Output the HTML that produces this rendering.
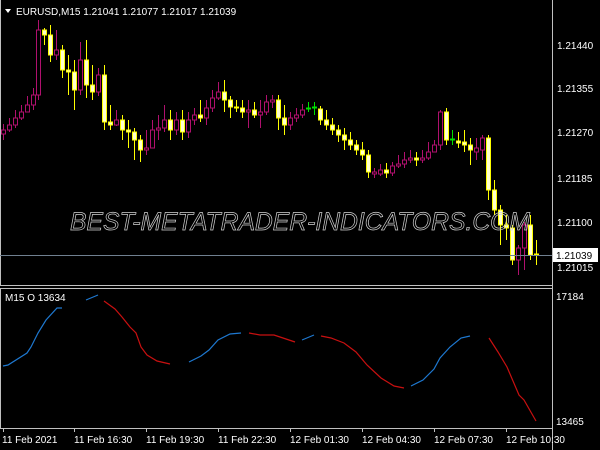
<!DOCTYPE html>
<html><head><meta charset="utf-8"><style>
html,body{margin:0;padding:0;background:#000;width:600px;height:450px;overflow:hidden}
svg{display:block}
text{font-family:"Liberation Sans",sans-serif;fill:#fff;font-size:10px}
.y{fill:#ffffd0;stroke:#ffff00}
.m{fill:#000;stroke:#b0106e}
.g{fill:#000;stroke:#00e000}
</style></head><body>
<svg width="600" height="450" xmlns="http://www.w3.org/2000/svg">
<rect x="0" y="0" width="600" height="450" fill="#000"/>
<line x1="0.5" y1="0" x2="0.5" y2="285" stroke="#c0c0c0"/>
<line x1="552.5" y1="0" x2="552.5" y2="450" stroke="#c0c0c0"/>
<line x1="0" y1="285.5" x2="552" y2="285.5" stroke="#c0c0c0"/>
<line x1="0" y1="288.5" x2="552" y2="288.5" stroke="#c0c0c0"/>
<line x1="0.5" y1="288" x2="0.5" y2="428" stroke="#c0c0c0"/>
<line x1="0" y1="428.5" x2="552" y2="428.5" stroke="#c0c0c0"/>

<path stroke="#b0106e" fill="none" d="M3.5 124V140M9.5 118V132M15.5 110V128M21.5 105V120M27.5 96V112M33.5 88V110M38.5 20V100M56.5 30V60M80.5 42V95M98.5 68V96M116.5 110V126M146.5 130V155M152.5 120V145M158.5 115V140M164.5 105V132M176.5 112V135M188.5 112V138M194.5 108V125M206.5 100V125M212.5 90V112M218.5 82V100M248.5 100V128M260.5 100V128M266.5 95V115M272.5 95V108M290.5 112V130M296.5 108V122M302.5 104V118M374.5 168V178M380.5 164V176M392.5 162V176M398.5 155V168M404.5 152V168M410.5 150V163M422.5 150V163M428.5 142V160M434.5 140V152M440.5 110V150M476.5 138V160M482.5 135V160M518.5 245V275M524.5 222V270"/>
<path stroke="#ffff00" fill="none" d="M44.5 28V45M50.5 25V62M62.5 45V78M68.5 55V95M74.5 60V110M86.5 40V98M92.5 65V100M104.5 65V130M110.5 105V130M122.5 115V140M128.5 120V148M134.5 128V160M140.5 135V162M170.5 110V140M182.5 110V140M200.5 100V122M224.5 80V112M230.5 96V118M236.5 100V112M242.5 100V118M254.5 102V118M278.5 95V130M284.5 105V135M320.5 106V125M326.5 110V130M332.5 118V135M338.5 125V142M344.5 128V150M350.5 132V150M356.5 140V155M362.5 142V160M368.5 150V178M386.5 163V178M416.5 152V166M446.5 108V145M458.5 132V148M464.5 130V152M470.5 138V165M488.5 135V200M494.5 180V215M500.5 205V245M506.5 215V240M512.5 225V265M530.5 215V260M536.5 240V265"/>
<path stroke="#00e000" fill="none" d="M308.5 102V112M314.5 102V115M452.5 130V145"/>

<g>
<rect class="m" x="1.5" y="130" width="4" height="4"/><rect class="m" x="7.5" y="125" width="4" height="5"/><rect class="m" x="13.5" y="118" width="4" height="7"/><rect class="m" x="19.5" y="112" width="4" height="6"/><rect class="m" x="25.5" y="105" width="4" height="7"/><rect class="m" x="31.5" y="95" width="4" height="10"/><rect class="m" x="36.5" y="30" width="4" height="65"/>
<rect class="y" x="42.5" y="30" width="4" height="5"/><rect class="y" x="48.5" y="35" width="4" height="20"/><rect class="m" x="54.5" y="50" width="4" height="5"/><rect class="y" x="60.5" y="50" width="4" height="20"/><rect class="y" x="66.5" y="70" width="4" height="2"/><rect class="y" x="72.5" y="72" width="4" height="18"/><rect class="m" x="78.5" y="60" width="4" height="30"/><rect class="y" x="84.5" y="60" width="4" height="25"/><rect class="y" x="90.5" y="85" width="4" height="7"/><rect class="m" x="96.5" y="75" width="4" height="17"/><rect class="y" x="102.5" y="75" width="4" height="47"/><rect class="y" x="108.5" y="122" width="4" height="3"/><rect class="m" x="114.5" y="120" width="4" height="5"/><rect class="y" x="120.5" y="120" width="4" height="10"/><rect class="y" x="126.5" y="130" width="4" height="2"/><rect class="y" x="132.5" y="132" width="4" height="8"/><rect class="y" x="138.5" y="140" width="4" height="10"/><rect class="m" x="144.5" y="148" width="4" height="2"/><rect class="m" x="150.5" y="130" width="4" height="18"/><rect class="m" x="156.5" y="128" width="4" height="2"/><rect class="m" x="162.5" y="120" width="4" height="8"/><rect class="y" x="168.5" y="120" width="4" height="10"/><rect class="m" x="174.5" y="120" width="4" height="10"/><rect class="y" x="180.5" y="120" width="4" height="12"/><rect class="m" x="186.5" y="120" width="4" height="12"/><rect class="m" x="192.5" y="115" width="4" height="5"/><rect class="y" x="198.5" y="115" width="4" height="3"/><rect class="m" x="204.5" y="108" width="4" height="10"/><rect class="m" x="210.5" y="98" width="4" height="10"/><rect class="m" x="216.5" y="92" width="4" height="6"/><rect class="y" x="222.5" y="92" width="4" height="8"/><rect class="y" x="228.5" y="100" width="4" height="7"/><rect class="y" x="234.5" y="107" width="4" height="1"/><rect class="y" x="240.5" y="108" width="4" height="4"/><rect class="m" x="246.5" y="110" width="4" height="2"/><rect class="y" x="252.5" y="110" width="4" height="5"/><rect class="m" x="258.5" y="112" width="4" height="3"/><rect class="m" x="264.5" y="102" width="4" height="10"/><rect class="m" x="270.5" y="100" width="4" height="2"/><rect class="y" x="276.5" y="100" width="4" height="18"/><rect class="y" x="282.5" y="118" width="4" height="7"/><rect class="m" x="288.5" y="118" width="4" height="7"/><rect class="m" x="294.5" y="115" width="4" height="3"/><rect class="m" x="300.5" y="110" width="4" height="5"/><rect class="g" x="306.5" y="108" width="4" height="1"/><rect class="g" x="312.5" y="107" width="4" height="1"/><rect class="y" x="318.5" y="109" width="4" height="11"/><rect class="y" x="324.5" y="120" width="4" height="5"/><rect class="y" x="330.5" y="125" width="4" height="5"/><rect class="y" x="336.5" y="130" width="4" height="5"/><rect class="y" x="342.5" y="135" width="4" height="5"/><rect class="y" x="348.5" y="140" width="4" height="5"/><rect class="y" x="354.5" y="145" width="4" height="5"/><rect class="y" x="360.5" y="150" width="4" height="5"/><rect class="y" x="366.5" y="155" width="4" height="17"/><rect class="m" x="372.5" y="172" width="4" height="2"/><rect class="m" x="378.5" y="170" width="4" height="4"/><rect class="y" x="384.5" y="170" width="4" height="3"/><rect class="m" x="390.5" y="166" width="4" height="7"/><rect class="m" x="396.5" y="164" width="4" height="2"/><rect class="m" x="402.5" y="160" width="4" height="4"/><rect class="m" x="408.5" y="158" width="4" height="2"/><rect class="y" x="414.5" y="158" width="4" height="2"/><rect class="m" x="420.5" y="158" width="4" height="2"/><rect class="m" x="426.5" y="152" width="4" height="6"/><rect class="m" x="432.5" y="145" width="4" height="7"/><rect class="m" x="438.5" y="112" width="4" height="33"/><rect class="y" x="444.5" y="112" width="4" height="28"/><rect class="g" x="450.5" y="139" width="4" height="1"/><rect class="y" x="456.5" y="141" width="4" height="2"/><rect class="y" x="462.5" y="142" width="4" height="3"/><rect class="y" x="468.5" y="145" width="4" height="5"/><rect class="m" x="474.5" y="148" width="4" height="4"/><rect class="m" x="480.5" y="138" width="4" height="12"/><rect class="y" x="486.5" y="138" width="4" height="52"/><rect class="y" x="492.5" y="190" width="4" height="20"/><rect class="y" x="498.5" y="210" width="4" height="15"/><rect class="y" x="504.5" y="225" width="4" height="3"/><rect class="y" x="510.5" y="228" width="4" height="32"/><rect class="m" x="516.5" y="248" width="4" height="12"/><rect class="m" x="522.5" y="225" width="4" height="23"/><rect class="y" x="528.5" y="225" width="4" height="30"/><rect class="y" x="534.5" y="254" width="4" height="1"/>
</g>

<text x="70" y="230" font-style="italic" style="fill:none;stroke:#d0d0d0;stroke-width:0.7;font-size:25px" textLength="460" lengthAdjust="spacingAndGlyphs">BEST-METATRADER-INDICATORS.COM</text>
<line x1="0" y1="255.5" x2="552" y2="255.5" stroke="#708090"/>
<polygon points="5,9 11,9 8,13" fill="#fff"/>
<text x="16" y="15">EURUSD,M15  1.21041 1.21077 1.21017 1.21039</text>
<g>
<text x="557" y="49">1.21440</text>
<text x="557" y="92">1.21355</text>
<text x="557" y="136">1.21270</text>
<text x="557" y="182">1.21185</text>
<text x="557" y="226">1.21100</text>
<text x="557" y="271">1.21015</text>
<rect x="553" y="248" width="45" height="14" fill="#fff"/>
<text x="556" y="259" style="fill:#000">1.21039</text>
<text x="556" y="300">17184</text>
<text x="556" y="425">13465</text>
<text x="5" y="301">M15 O 13634</text>
</g>
<g stroke="#c0c0c0">
<line x1="3.5" y1="428" x2="3.5" y2="432"/><line x1="74.5" y1="428" x2="74.5" y2="432"/><line x1="146.5" y1="428" x2="146.5" y2="432"/><line x1="218.5" y1="428" x2="218.5" y2="432"/><line x1="290.5" y1="428" x2="290.5" y2="432"/><line x1="362.5" y1="428" x2="362.5" y2="432"/><line x1="434.5" y1="428" x2="434.5" y2="432"/><line x1="506.5" y1="428" x2="506.5" y2="432"/>
</g>
<g>
<text x="2" y="443">11 Feb 2021</text><text x="74" y="443">11 Feb 16:30</text><text x="146" y="443">11 Feb 19:30</text><text x="218" y="443">11 Feb 22:30</text><text x="290" y="443">12 Feb 01:30</text><text x="362" y="443">12 Feb 04:30</text><text x="434" y="443">12 Feb 07:30</text><text x="506" y="443">12 Feb 10:30</text>
</g>
<g fill="none" stroke-width="1.2">
<polyline stroke="#1e78d0" points="3,366 8,365 27,353 31,347 38,333 46,320 57,308 62,308"/>
<polyline stroke="#1e78d0" points="86,300 98,295"/>
<polyline stroke="#c81010" points="104,301 115,309 122,317 130,327 136,333 141,347 147,355 157,361 170,364"/>
<polyline stroke="#1e78d0" points="189,362 201,356 209,350 218,340 230,334 241,333"/>
<polyline stroke="#c81010" points="249,333 260,335 274,335 283,338 295,342"/>
<polyline stroke="#1e78d0" points="302,340 314,335"/>
<polyline stroke="#c81010" points="321,336 331,338 344,343 356,352 367,365 381,378 394,386 404,388"/>
<polyline stroke="#1e78d0" points="411,386 423,380 434,369 440,358 450,347 461,338 470,336"/>
<polyline stroke="#c81010" points="489,338 498,352 507,367 519,395 524,400 536,421"/>
</g>
</svg>
</body></html>
